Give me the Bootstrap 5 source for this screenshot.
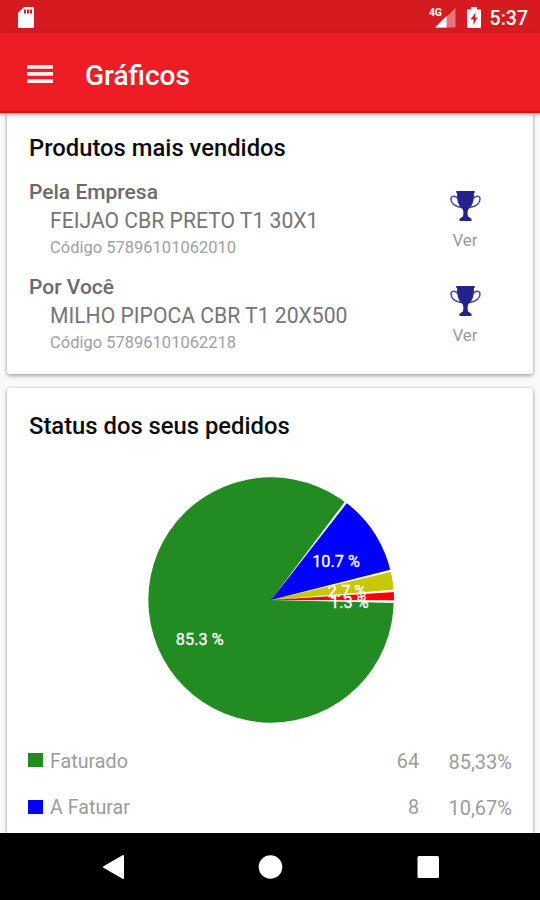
<!DOCTYPE html>
<html lang="pt-BR">
<head>
<meta charset="utf-8">
<meta name="viewport" content="width=device-width, initial-scale=1">
<title>Gráficos</title>
<link href="https://cdn.jsdelivr.net/npm/bootstrap@5.3.0/dist/css/bootstrap.min.css" rel="stylesheet">
<style>
body{font-family:Roboto,"Liberation Sans",sans-serif;background:#fafafa;height:900px;overflow:hidden;line-height:1}
.status-bar{height:33px;background:#d51b20;padding:2px 12px 0 18px}
.clock{font-size:19.5px;font-weight:500;line-height:24px;margin-left:9px;padding-top:2px}
.battery{margin-left:11px}
.app-bar{height:80px;background:#ee1c24;padding:4px 27px 0;border-bottom:2px solid #e8090e;position:relative;z-index:2;box-shadow:0 2px 4px rgba(0,0,0,.28)}
.app-title{font-size:28px;font-weight:500;line-height:36px;margin-left:32px;padding-top:3px}
.panel{margin:0 7px;border:0;border-radius:3px;box-shadow:0 2px 4px rgba(0,0,0,.3),0 0 3px rgba(0,0,0,.18);padding:0 21px 0 22px}
.panel-top{height:261px;border-radius:0 0 3px 3px;margin-bottom:14px;padding-top:21px}
.panel-bottom{height:445px;border-radius:3px 3px 0 0;padding-top:24px}
.panel-title{font-size:23.8px;font-weight:500;line-height:28px;color:#0c0c0c;margin:0}
.product{height:95px}
.product-group{font-size:21px;font-weight:500;line-height:28px;color:#6a6a6a}
.product-name{font-size:21.15px;line-height:30px;color:#757575}
.product-code{font-size:16.5px;line-height:23px;color:#a0a0a0}
.product-text>:not(.product-group){padding-left:21px}
.see{width:60px;margin-right:17px;padding-top:12px;color:#9a9a9a;font-size:17px;line-height:20px}
.see svg{margin-bottom:8px}
.pie-box{height:298.5px;padding-top:27.5px}
.legend-row{height:46.5px;font-size:19.7px;color:#9b9b9b}
.swatch{width:15px;height:14px;margin-right:7px;margin-left:-1px;margin-top:-3px}
.faturado{background:#228b22}
.a-faturar{background:#00f}
.share{width:93px;font-size:20px}
.nav-keys{height:67px;position:relative;z-index:3}
</style>
<script src="https://cdn.jsdelivr.net/npm/bootstrap@5.3.0/dist/js/bootstrap.bundle.min.js"></script>
</head>
<body class="d-flex flex-column">
<header class="flex-shrink-0">
  <div class="status-bar d-flex align-items-center text-white">
    <svg width="16" height="21" viewBox="0 0 16 21" class="me-auto"><path fill="#fff" d="M6 0h8.500q1.500 0 1.500 1.500v18q0 1.500-1.500 1.500h-13q-1.500 0-1.500-1.500V6z"/><path fill="#d51b20" d="M6 2.500h2v4H6zM9 2.500h2v4H9zM12 2.500h2v4h-2z"/></svg>
    <svg width="27" height="22" viewBox="0 0 27 22"><path fill="#fff" fill-opacity=".4" d="M26.500 1v19.500h-20z"/><path fill="#d51b20" d="M0 0h13v11H0z"/><path fill="#fff" d="M6 20.500 17.500 9v11.500z"/><text x="0" y="9" font-size="10.500" font-weight="700" fill="#fff" letter-spacing="-.3">4G</text></svg>
    <svg class="battery" width="14" height="22" viewBox="0 0 14 22"><path fill="#fff" d="M4 0h6v2.500h3q1 0 1 1V20q0 1-1 1H1q-1 0-1-1V3.500q0-1 1-1h3z"/><path fill="#d51b20" d="M8.500 5.500 3.500 12.500H6.500V18L10.500 10.500H8z"/></svg>
    <span class="clock">5:37</span>
  </div>
  <nav class="app-bar d-flex align-items-center text-white">
    <svg width="26" height="20" viewBox="0 0 26 20"><path fill="#fff" fill-opacity=".93" d="M0 1h26v3.700H0zM0 8.100h26v3.700H0zM0 15.200h26v3.700H0z"/></svg>
    <span class="app-title">Gráficos</span>
  </nav>
</header>
<main class="flex-shrink-0">
  <section class="card panel panel-top">
    <h2 class="panel-title mb-3">Produtos mais vendidos</h2>
    <div class="product d-flex justify-content-between">
      <div class="product-text">
        <div class="product-group">Pela Empresa</div>
        <div class="product-name">FEIJAO CBR PRETO T1 30X1</div>
        <div class="product-code">Código 57896101062010</div>
      </div>
      <div class="see d-flex flex-column align-items-center">
        <svg width="31" height="32" viewBox="0 0 31 32"><g id="cup"><path fill="none" stroke="#4a4aa6" stroke-width="1.500" d="M7 8.500C6.500 5.500 1 5.200 1 8.700c0 4.300 4 7.600 10 8.800M24 8.500c.5-3 6-3.300 6 .2 0 4.300-4 7.600-10 8.800"/><path fill="#23238e" d="M6.300 1h18.400v2h-.8c.3 8-1.400 13-5.700 16.500-.8 1.500-.8 5.500 0 7l3.300 2.200V31H9.500v-2.300l3.300-2.200c.8-1.500.8-5.500 0-7C8.500 16 6.800 11 7.100 3h-.8z"/></g></svg>
        <span>Ver</span>
      </div>
    </div>
    <div class="product d-flex justify-content-between">
      <div class="product-text">
        <div class="product-group">Por Você</div>
        <div class="product-name">MILHO PIPOCA CBR T1 20X500</div>
        <div class="product-code">Código 57896101062218</div>
      </div>
      <div class="see d-flex flex-column align-items-center">
        <svg width="31" height="32" viewBox="0 0 31 32"><use href="#cup"/></svg>
        <span>Ver</span>
      </div>
    </div>
  </section>
  <section class="card panel panel-bottom">
    <h2 class="panel-title">Status dos seus pedidos</h2>
    <div class="pie-box text-center">
      <svg width="248" height="248" viewBox="-124 -124 248 248" class="mt-2">
        <circle r="122.700" fill="#228b22"/>
        <path fill="#00f" d="M0 0 119.500-29.100A123 123 0 0 0 74.900-97.600z"/>
        <path fill="#c8c800" d="M0 0 122.700-9.100A123 123 0 0 0 119.500-29.100z"/>
        <path fill="#f00" d="M0 0 123 1.300A123 123 0 0 0 122.700-9.100z"/>
        <path fill="#fff" d="M0 0 75.100-99.900 77.100-98.500zM0 0 121.100-30.800 121.700-28.400zM0 0 124.600-10.500 124.800-8.100zM0 0 125 .3 125 2.900z"/>
        <g fill="#fff" stroke="#fff" stroke-width=".3" font-size="16.300" text-anchor="middle">
          <text x="65" y="-33">10.7 %</text>
          <text x="76" y="-3">2.7 %</text>
          <text x="78.300" y="8">1.3 %</text>
          <text x="-71.300" y="45">85.3 %</text>
        </g>
      </svg>
    </div>
    <div class="legend-row d-flex align-items-center">
      <span class="swatch faturado"></span><span class="me-auto">Faturado</span><span>64</span><span class="share text-end">85,33%</span>
    </div>
    <div class="legend-row d-flex align-items-center">
      <span class="swatch a-faturar"></span><span class="me-auto">A Faturar</span><span>8</span><span class="share text-end">10,67%</span>
    </div>
  </section>
</main>
<footer class="nav-keys bg-black flex-shrink-0 d-flex justify-content-center align-items-center">
  <svg width="337" height="26" viewBox="0 0 337 26"><path fill="#fff" stroke="#fff" stroke-width="2" stroke-linejoin="round" d="M2 13 21 2v22z"/><circle cx="168.500" cy="13" r="11.800" fill="#fff"/><rect x="315.500" y="2" width="21.500" height="22" rx="1.500" fill="#fff"/></svg>
</footer>
</body>
</html>
